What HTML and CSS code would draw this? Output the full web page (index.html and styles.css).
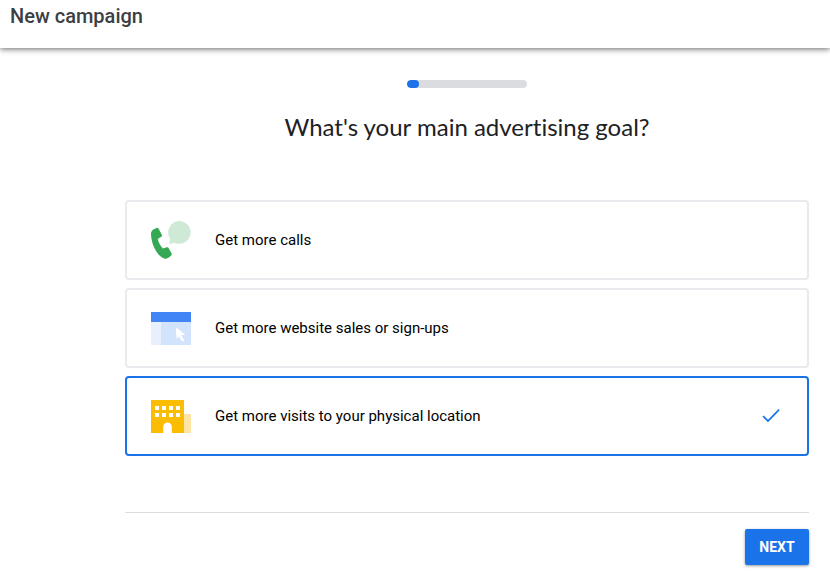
FILE: index.html
```html
<!DOCTYPE html>
<html lang="en">
<head>
    <meta charset="UTF-8">
    <meta name="viewport" content="width=device-width, initial-scale=1.0">
    <title>New campaign</title>
    <link rel="stylesheet" href="styles.css">
</head>
<body>
    <header class="header">
        <h1>New campaign</h1>
    </header>
    <main>
        <form class="goal-form">
            <progress class="progress" value="10" max="100" aria-label="Setup progress"></progress>
            <h2 id="goal-title">What's your main advertising goal?</h2>
            <div class="goals" role="radiogroup" aria-labelledby="goal-title">
                <label class="goal">
                    <input type="radio" name="goal" value="calls">
                    <svg class="goal-icon" viewBox="0 0 40 40" aria-hidden="true">
                        <path fill="#ceead6" d="M28.400 1a11.400 11.400 0 1 1-4.600 21.900L18 24l1.200-5.200A11.400 11.400 0 0 1 28.400 1z"/>
                        <path fill="#34a853" d="M2.400 9.600L5.600 8c.8-.4 1.500-.1 1.900.6l3.300 6.200c.4.8.2 1.500-.5 1.900l-3.600 2.300c.8 3.500 2.600 6.700 5.100 9.500l4-1.300c.8-.2 1.400 0 1.800.7l3 5.600c.4.7.2 1.300-.4 1.900l-2.400 2.200c-1.300 1.100-3 1.300-4.700.8C6.200 35.800.5 25.200 0 14.500c-.1-2.200.7-3.900 2.400-4.900z"/>
                    </svg>
                    <span class="goal-text">Get more calls</span>
                </label>
                <label class="goal">
                    <input type="radio" name="goal" value="website">
                    <svg class="goal-icon" viewBox="0 0 40 40" aria-hidden="true">
                        <path fill="#4285f4" d="M0 4h40v10H0z"/>
                        <path fill="#e8f0fe" d="M0 14h10v23H0z"/>
                        <path fill="#d2e3fc" d="M10 14h30v23H10z"/>
                        <path fill="#fff" d="M24.700 19l9.500 7.700-4 .5 3 5.200-2.200 1.200-3-5.200-2.300 2.500z"/>
                    </svg>
                    <span class="goal-text">Get more website sales or sign-ups</span>
                </label>
                <label class="goal">
                    <input type="radio" name="goal" value="visits" checked>
                    <svg class="goal-icon" viewBox="0 0 40 40" aria-hidden="true">
                        <path fill="#fee5a5" d="M33 18h7v19h-7z"/>
                        <path fill="#fbbc04" d="M0 4h33v33H0z"/>
                        <path fill="#fff" d="M4 10h4v4H4zM11 10h4v4h-4zM18 10h4v4h-4zM25 10h4v4h-4zM4 17h4v4H4zM11 17h4v4h-4zM18 17h4v4h-4zM25 17h4v4h-4z"/>
                        <path fill="#fff" d="M12.200 37v-6.300a4.300 4.300 0 0 1 8.600 0V37z"/>
                    </svg>
                    <span class="goal-text">Get more visits to your physical location</span>
                    <svg class="goal-check" viewBox="0 0 24 24" aria-hidden="true">
                        <path fill="#1a73e8" d="M9 15.800L4.700 11.500l-1.200 1.200L9 18.200 20.700 6.300l-1.200-1.200L9 15.800z"/>
                    </svg>
                </label>
            </div>
            <div class="actions">
                <button type="submit">NEXT</button>
            </div>
        </form>
    </main>
</body>
</html>
```
FILE: styles.css
```css
* {
    box-sizing: border-box;
}
body {
    margin: 0;
    background-color: #fff;
    color: #202124;
    font-family: Roboto, "Liberation Sans", sans-serif;
}
.header {
    height: 48px;
    padding: 4px 10px;
    box-shadow: 0 1px 6px rgba(0, 0, 0, 0.6);
}
.header h1 {
    margin: 0;
    color: #3c4043;
    font-size: 20px;
    font-weight: 500;
    line-height: 24px;
}
main {
    padding: 32px 21px 14px 125px;
}
.goal-form {
    display: flex;
    flex-direction: column;
}
.progress {
    align-self: center;
    appearance: none;
    width: 120px;
    height: 8px;
    border: none;
    border-radius: 4px;
    overflow: hidden;
    background-color: #dadce0;
}
.progress::-webkit-progress-bar {
    background-color: #dadce0;
}
.progress::-webkit-progress-value {
    border-radius: 4px;
    background-color: #1a73e8;
}
.goal-form h2 {
    margin: 24px 0 58px;
    font-family: Lato, Roboto, sans-serif;
    font-size: 24px;
    font-weight: 400;
    font-variant-ligatures: none;
    line-height: 30px;
    text-align: center;
}
.goals {
    display: flex;
    flex-direction: column;
    gap: 8px;
}
.goal {
    position: relative;
    display: flex;
    align-items: center;
    gap: 24px;
    height: 80px;
    padding: 0 24px;
    border: 2px solid #e8eaed;
    border-radius: 4px;
    cursor: pointer;
}
.goal:has(input:checked) {
    border-color: #1a73e8;
}
.goal input {
    position: absolute;
    opacity: 0;
}
.goal-icon {
    flex: none;
    width: 40px;
    height: 40px;
}
.goal-text {
    flex: 1;
    color: #000;
    font-size: 15px;
    line-height: 24px;
}
.goal-check {
    width: 24px;
    height: 24px;
}
.actions {
    display: flex;
    justify-content: flex-end;
    margin-top: 56px;
    padding-top: 16px;
    border-top: 1px solid #dadce0;
}
.actions button {
    min-width: 64px;
    height: 36px;
    padding: 0 14px;
    border: none;
    border-radius: 2px;
    background-color: #1a73e8;
    box-shadow: 0 1px 3px rgba(0, 0, 0, 0.4);
    color: #fff;
    font-family: inherit;
    font-size: 14px;
    font-weight: 700;
    cursor: pointer;
}
```
